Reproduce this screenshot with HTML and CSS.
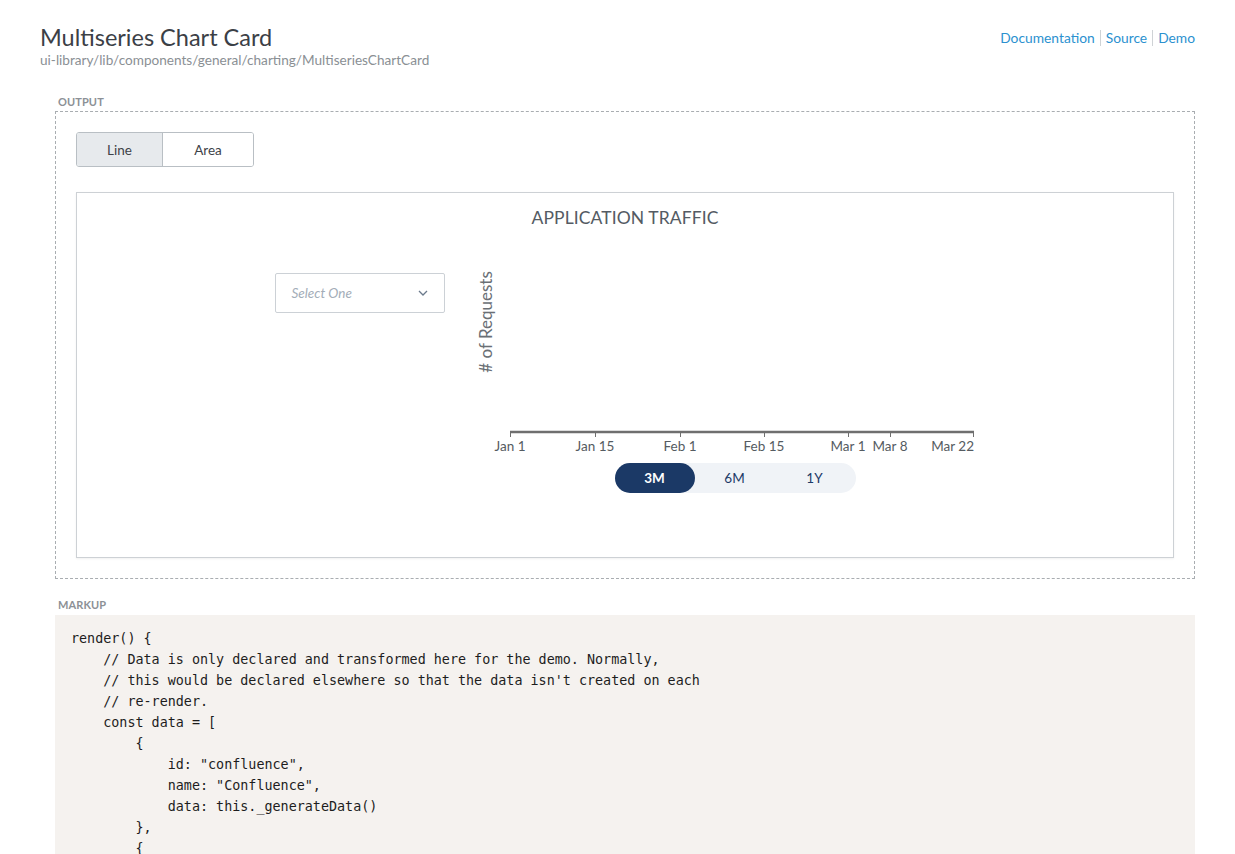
FILE: index.html
```html
<!DOCTYPE html>
<html lang="en">
<head>
<meta charset="utf-8">
<title>Multiseries Chart Card</title>
<link rel="stylesheet" href="styles.css">
</head>
<body>
<div class="page">
  <header class="header">
    <div class="heading">
      <h1 class="title">Multiseries Chart Card</h1>
      <div class="path">ui-library/lib/components/general/charting/MultiseriesChartCard</div>
    </div>
    <nav class="links">
      <a href="#" class="link">Documentation</a>
      <a href="#" class="link">Source</a>
      <a href="#" class="link">Demo</a>
    </nav>
  </header>

  <section class="section">
    <div class="section-label">Output</div>
    <div class="output">
      <div class="toggle">
        <button class="toggle-btn is-active">Line</button>
        <button class="toggle-btn">Area</button>
      </div>
      <div class="card">
        <div class="card-title">Application Traffic</div>
        <div class="card-body">
          <div class="select">
            <span class="select-placeholder">Select One</span>
            <svg class="select-chevron" width="10" height="6" viewBox="0 0 10 6"><path d="M1 1l4 4 4-4" fill="none" stroke="#6b7a8c" stroke-width="1.3"/></svg>
          </div>
          <div class="chart">
            <svg class="chart-svg" width="502" height="196" viewBox="0 0 502 196">
              <text class="axis-title" transform="translate(16 57) rotate(-90)" text-anchor="middle">#&#160;of Requests</text>
              <line x1="34" y1="167" x2="498" y2="167" stroke="#6f6f6f" stroke-width="2.5"/>
              <g stroke="#6f6f6f" stroke-width="1">
                <line x1="34.5" y1="167" x2="34.5" y2="172"/>
                <line x1="119.5" y1="167" x2="119.5" y2="172"/>
                <line x1="204.5" y1="167" x2="204.5" y2="172"/>
                <line x1="288.5" y1="167" x2="288.5" y2="172"/>
                <line x1="372.5" y1="167" x2="372.5" y2="172"/>
                <line x1="414.5" y1="167" x2="414.5" y2="172"/>
                <line x1="497.5" y1="167" x2="497.5" y2="172"/>
              </g>
              <g class="tick-label">
                <text x="34" y="186" text-anchor="middle">Jan 1</text>
                <text x="119" y="186" text-anchor="middle">Jan 15</text>
                <text x="204" y="186" text-anchor="middle">Feb 1</text>
                <text x="288" y="186" text-anchor="middle">Feb 15</text>
                <text x="372" y="186" text-anchor="middle">Mar 1</text>
                <text x="414" y="186" text-anchor="middle">Mar 8</text>
                <text x="498" y="186" text-anchor="end">Mar 22</text>
              </g>
            </svg>
            <div class="range">
              <button class="range-btn is-active">3M</button>
              <button class="range-btn">6M</button>
              <button class="range-btn">1Y</button>
            </div>
          </div>
        </div>
      </div>
    </div>
  </section>

  <section class="section">
    <div class="section-label">Markup</div>
<pre class="code">render() {
    // Data is only declared and transformed here for the demo. Normally,
    // this would be declared elsewhere so that the data isn't created on each
    // re-render.
    const data = [
        {
            id: "confluence",
            name: "Confluence",
            data: this._generateData()
        },
        {
            id: "jira",
            name: "Jira",
            data: this._generateData()
        }
    ];
}</pre>
  </section>
</div>
</body>
</html>
```

FILE: styles.css
```css
* { box-sizing: border-box; }
html, body { margin: 0; padding: 0; background: #ffffff; }
body {
  font-family: Lato, "Open Sans", "Liberation Sans", sans-serif;
  color: #333;
}
.page {
  padding: 23px 40px 0 40px;
}
.header {
  display: flex;
  justify-content: space-between;
  align-items: flex-start;
}
.title {
  margin: 0;
  font-size: 23.5px;
  font-weight: 400;
  line-height: 28px;
  color: #3b4046;
}
.path {
  font-size: 13.6px;
  line-height: 16px;
  color: #8a8f94;
  margin-top: 1px;
}
.links {
  display: flex;
  align-items: center;
  margin-top: 7px;
}
.link {
  font-size: 13.8px;
  line-height: 16px;
  color: #2b91cf;
  text-decoration: none;
  padding: 0 5px;
  border-left: 1px solid #cfd3d6;
}
.link:first-child { border-left: none; padding-left: 0; }
.link:last-child { padding-right: 0; }

.section {
  margin-left: 15px;
}
.section-label {
  font-size: 11px;
  font-weight: 700;
  text-transform: uppercase;
  color: #8c9196;
  letter-spacing: 0.1px;
  padding-left: 3px;
  line-height: 14px;
  margin-top: 27px;
  margin-bottom: 2px;
}
.section + .section .section-label { margin-top: 19px; margin-bottom: 3px; }

.output {
  border: 1px dashed #a9adb1;
  padding: 20px;
}
.toggle {
  display: inline-flex;
  border: 1px solid #b9bfc4;
  border-radius: 3px;
  overflow: hidden;
}
.toggle-btn {
  font-family: inherit;
  font-size: 13.5px;
  color: #3d4248;
  background: #fff;
  border: none;
  height: 33px;
  width: 90px;
  padding: 0;
}
.toggle-btn.is-active {
  background: #e7eaed;
  width: 86px;
  border-right: 1px solid #b9bfc4;
}
.card {
  margin-top: 25px;
  border: 1px solid #cdd1d5;
  box-shadow: 0 1px 2px rgba(0,0,0,0.06);
  height: 366px;
  padding-top: 15px;
}
.card-title {
  text-align: center;
  font-size: 17.5px;
  line-height: 20px;
  text-transform: uppercase;
  color: #545b63;
  letter-spacing: 0.1px;
}
.card-body {
  display: flex;
  justify-content: center;
  align-items: flex-start;
  margin-top: 45px;
  padding-left: 2px;
}
.select {
  width: 170px;
  height: 40px;
  border: 1px solid #ccd1d6;
  border-radius: 2px;
  display: flex;
  align-items: center;
  justify-content: space-between;
  padding: 0 16px 0 16px;
  margin-top: 0;
  margin-right: 31px;
}
.select-placeholder {
  font-size: 13.5px;
  font-style: italic;
  color: #a3adb8;
}
.chart {
  display: flex;
  flex-direction: column;
  margin-top: -8px;
}
.chart-svg { display: block; }
.axis-title {
  font-family: Lato, "Open Sans", sans-serif;
  font-size: 17px;
  fill: #6a6f75;
}
.tick-label text {
  font-family: Lato, "Open Sans", sans-serif;
  font-size: 13.5px;
  fill: #555b61;
}
.range {
  display: flex;
  margin-left: 139px;
  margin-top: 2px;
  width: 241px;
  height: 30px;
  background: #f0f3f7;
  border-radius: 15px;
}
.range-btn {
  width: 80px;
  height: 30px;
  border: none;
  background: transparent;
  font-family: inherit;
  font-size: 13.5px;
  color: #1c3a68;
  border-radius: 15px;
  padding: 0;
}
.range-btn.is-active {
  background: #1b3966;
  color: #fff;
  font-weight: 700;
}

.code {
  margin: 0;
  background: #f5f2ef;
  padding: 13px 16px 20px 16px;
  font-family: "DejaVu Sans Mono", "Liberation Mono", monospace;
  font-size: 13.4px;
  line-height: 21px;
  color: #1d1d1d;
}
```
